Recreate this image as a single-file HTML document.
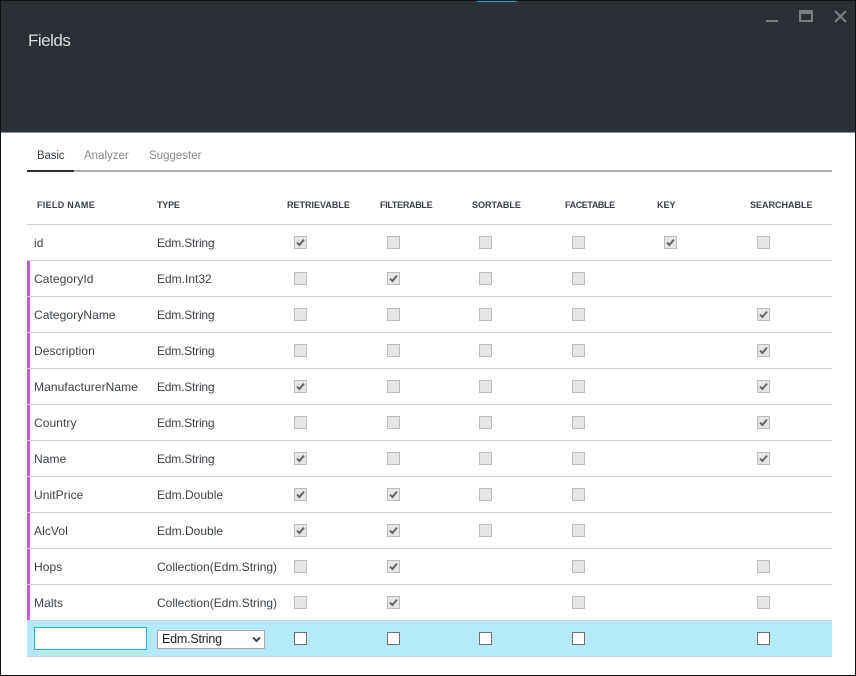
<!DOCTYPE html>
<html>
<head>
<meta charset="utf-8">
<title>Fields</title>
<style>
html,body{margin:0;padding:0;background:#fff}
#w{position:relative;width:856px;height:676px;overflow:hidden;background:#fff;font-family:"Liberation Sans",sans-serif;font-size:12px;color:#3c4247}
#w div,#w span.a{position:absolute}
.hd{top:199px;height:12px;line-height:12px;font-size:9px;font-weight:bold;color:#3a4046;white-space:nowrap}
.ln{left:27px;width:805px;height:1px;background:#cfcfcf}
.pb{left:27px;width:3px;height:35px;background:#c85ad8}
.n,.t{height:16px;line-height:16px;white-space:nowrap;margin-top:1px}
.n{left:34px;letter-spacing:.08px}
.t{left:157px}
.s{letter-spacing:-.2px}
.k{width:11px;height:11px;border:1px solid #bdbdbd;background:#e6e6e6}
.k svg{position:absolute;left:-1px;top:-1px;width:13px;height:13px}
.e{width:11px;height:11px;border:1px solid #6f6f6f;background:#fff}
.c1{left:294px}.c2{left:387px}.c3{left:479px}.c4{left:572px}.c5{left:664px}.c6{left:757px}
</style>
</head>
<body>
<div id="w">
<svg width="0" height="0" style="position:absolute"><defs><path id="c" d="M3 6.6L5.4 9L10 3.6" fill="none" stroke="#666" stroke-width="2"/></defs></svg>

<div style="left:0;top:0;width:856px;height:133px;background:#2a3035"></div>
<div style="left:0;top:0;width:856px;height:1px;background:#111"></div>
<div style="left:477px;top:1px;width:40px;height:1px;background:#12a5d6"></div>
<div style="left:0;top:0;width:1px;height:676px;background:#111"></div>
<div style="left:855px;top:0;width:1px;height:676px;background:#111"></div>
<div style="left:0;top:675px;width:856px;height:1px;background:#111"></div>
<div style="left:1px;top:132px;width:854px;height:1px;background:#8a8e91"></div>
<div style="left:28px;top:31px;font-size:17px;line-height:20px;letter-spacing:-.5px;color:#dcdee0">Fields</div>

<div style="left:766px;top:20px;width:12px;height:2px;background:#7b7f82"></div>
<div style="left:799px;top:10px;width:10px;height:6px;border:2px solid #7b7f82;border-top-width:4px"></div>
<svg style="position:absolute;left:834px;top:10px" width="13" height="13" viewBox="0 0 13 13"><path d="M1 1L12 12M12 1L1 12" stroke="#7b7f82" stroke-width="2" fill="none"/></svg>

<div style="left:37px;top:149px;line-height:15px;font-size:11.5px;letter-spacing:-.15px;color:#3c4247">Basic</div>
<div style="left:84px;top:149px;line-height:15px;font-size:11.5px;color:#888">Analyzer</div>
<div style="left:149px;top:149px;line-height:15px;font-size:11.5px;color:#888">Suggester</div>
<div style="left:27px;top:170px;width:805px;height:2px;background:#adadad"></div>
<div style="left:27px;top:170px;width:47px;height:2px;background:#2a3035"></div>

<div class="hd" style="left:37px;letter-spacing:.3px">FIELD NAME</div>
<div class="hd" style="left:157px;letter-spacing:-.2px">TYPE</div>
<div class="hd" style="left:287px">RETRIEVABLE</div>
<div class="hd" style="left:380px;letter-spacing:-.3px">FILTERABLE</div>
<div class="hd" style="left:472px">SORTABLE</div>
<div class="hd" style="left:565px;letter-spacing:-.4px">FACETABLE</div>
<div class="hd" style="left:657px">KEY</div>
<div class="hd" style="left:750px">SEARCHABLE</div>

<div class="ln" style="top:224px"></div>
<div class="ln" style="top:260px"></div>
<div class="ln" style="top:296px"></div>
<div class="ln" style="top:332px"></div>
<div class="ln" style="top:368px"></div>
<div class="ln" style="top:404px"></div>
<div class="ln" style="top:440px"></div>
<div class="ln" style="top:476px"></div>
<div class="ln" style="top:512px"></div>
<div class="ln" style="top:548px"></div>
<div class="ln" style="top:584px"></div>

<div class="pb" style="top:261px"></div>
<div class="pb" style="top:297px"></div>
<div class="pb" style="top:333px"></div>
<div class="pb" style="top:369px"></div>
<div class="pb" style="top:405px"></div>
<div class="pb" style="top:441px"></div>
<div class="pb" style="top:477px"></div>
<div class="pb" style="top:513px"></div>
<div class="pb" style="top:549px"></div>
<div class="pb" style="top:585px"></div>

<div class="n" style="top:234px">id</div><div class="t s" style="top:234px">Edm.String</div>
<div class="n" style="top:270px">CategoryId</div><div class="t" style="top:270px">Edm.Int32</div>
<div class="n" style="top:306px">CategoryName</div><div class="t s" style="top:306px">Edm.String</div>
<div class="n" style="top:342px">Description</div><div class="t s" style="top:342px">Edm.String</div>
<div class="n" style="top:378px">ManufacturerName</div><div class="t s" style="top:378px">Edm.String</div>
<div class="n" style="top:414px">Country</div><div class="t s" style="top:414px">Edm.String</div>
<div class="n" style="top:450px">Name</div><div class="t s" style="top:450px">Edm.String</div>
<div class="n" style="top:486px">UnitPrice</div><div class="t" style="top:486px">Edm.Double</div>
<div class="n" style="top:522px">AlcVol</div><div class="t" style="top:522px">Edm.Double</div>
<div class="n" style="top:558px">Hops</div><div class="t" style="top:558px">Collection(Edm.String)</div>
<div class="n" style="top:594px">Malts</div><div class="t" style="top:594px">Collection(Edm.String)</div>

<!-- id -->
<div class="k c1" style="top:236px"><svg viewBox="0 0 13 13"><use href="#c"/></svg></div>
<div class="k c2" style="top:236px"></div>
<div class="k c3" style="top:236px"></div>
<div class="k c4" style="top:236px"></div>
<div class="k c5" style="top:236px"><svg viewBox="0 0 13 13"><use href="#c"/></svg></div>
<div class="k c6" style="top:236px"></div>
<!-- CategoryId -->
<div class="k c1" style="top:272px"></div>
<div class="k c2" style="top:272px"><svg viewBox="0 0 13 13"><use href="#c"/></svg></div>
<div class="k c3" style="top:272px"></div>
<div class="k c4" style="top:272px"></div>
<!-- CategoryName -->
<div class="k c1" style="top:308px"></div>
<div class="k c2" style="top:308px"></div>
<div class="k c3" style="top:308px"></div>
<div class="k c4" style="top:308px"></div>
<div class="k c6" style="top:308px"><svg viewBox="0 0 13 13"><use href="#c"/></svg></div>
<!-- Description -->
<div class="k c1" style="top:344px"></div>
<div class="k c2" style="top:344px"></div>
<div class="k c3" style="top:344px"></div>
<div class="k c4" style="top:344px"></div>
<div class="k c6" style="top:344px"><svg viewBox="0 0 13 13"><use href="#c"/></svg></div>
<!-- ManufacturerName -->
<div class="k c1" style="top:380px"><svg viewBox="0 0 13 13"><use href="#c"/></svg></div>
<div class="k c2" style="top:380px"></div>
<div class="k c3" style="top:380px"></div>
<div class="k c4" style="top:380px"></div>
<div class="k c6" style="top:380px"><svg viewBox="0 0 13 13"><use href="#c"/></svg></div>
<!-- Country -->
<div class="k c1" style="top:416px"></div>
<div class="k c2" style="top:416px"></div>
<div class="k c3" style="top:416px"></div>
<div class="k c4" style="top:416px"></div>
<div class="k c6" style="top:416px"><svg viewBox="0 0 13 13"><use href="#c"/></svg></div>
<!-- Name -->
<div class="k c1" style="top:452px"><svg viewBox="0 0 13 13"><use href="#c"/></svg></div>
<div class="k c2" style="top:452px"></div>
<div class="k c3" style="top:452px"></div>
<div class="k c4" style="top:452px"></div>
<div class="k c6" style="top:452px"><svg viewBox="0 0 13 13"><use href="#c"/></svg></div>
<!-- UnitPrice -->
<div class="k c1" style="top:488px"><svg viewBox="0 0 13 13"><use href="#c"/></svg></div>
<div class="k c2" style="top:488px"><svg viewBox="0 0 13 13"><use href="#c"/></svg></div>
<div class="k c3" style="top:488px"></div>
<div class="k c4" style="top:488px"></div>
<!-- AlcVol -->
<div class="k c1" style="top:524px"><svg viewBox="0 0 13 13"><use href="#c"/></svg></div>
<div class="k c2" style="top:524px"><svg viewBox="0 0 13 13"><use href="#c"/></svg></div>
<div class="k c3" style="top:524px"></div>
<div class="k c4" style="top:524px"></div>
<!-- Hops -->
<div class="k c1" style="top:560px"></div>
<div class="k c2" style="top:560px"><svg viewBox="0 0 13 13"><use href="#c"/></svg></div>
<div class="k c4" style="top:560px"></div>
<div class="k c6" style="top:560px"></div>
<!-- Malts -->
<div class="k c1" style="top:596px"></div>
<div class="k c2" style="top:596px"><svg viewBox="0 0 13 13"><use href="#c"/></svg></div>
<div class="k c4" style="top:596px"></div>
<div class="k c6" style="top:596px"></div>

<!-- new row -->
<div style="left:27px;top:620px;width:805px;height:37px;background:#b3e9f9"></div>
<div class="ln" style="top:620px"></div>
<div class="ln" style="top:656px"></div>
<div style="left:34px;top:627px;width:111px;height:21px;border:1px solid #16b4e6;background:#fff"></div>
<div style="left:157px;top:630px;width:106px;height:17px;border:1px solid #a9a9a9;background:#fff"></div>
<div style="left:162px;top:631px;line-height:16px;font-size:12.5px;letter-spacing:-.2px;color:#222">Edm.String</div>
<svg style="position:absolute;left:252px;top:636px" width="9" height="7" viewBox="0 0 9 7"><path d="M1 1.5L4.5 5L8 1.5" fill="none" stroke="#444" stroke-width="2"/></svg>
<div class="e c1" style="top:632px"></div>
<div class="e c2" style="top:632px"></div>
<div class="e c3" style="top:632px"></div>
<div class="e c4" style="top:632px"></div>
<div class="e c6" style="top:632px"></div>
</div>
</body>
</html>
